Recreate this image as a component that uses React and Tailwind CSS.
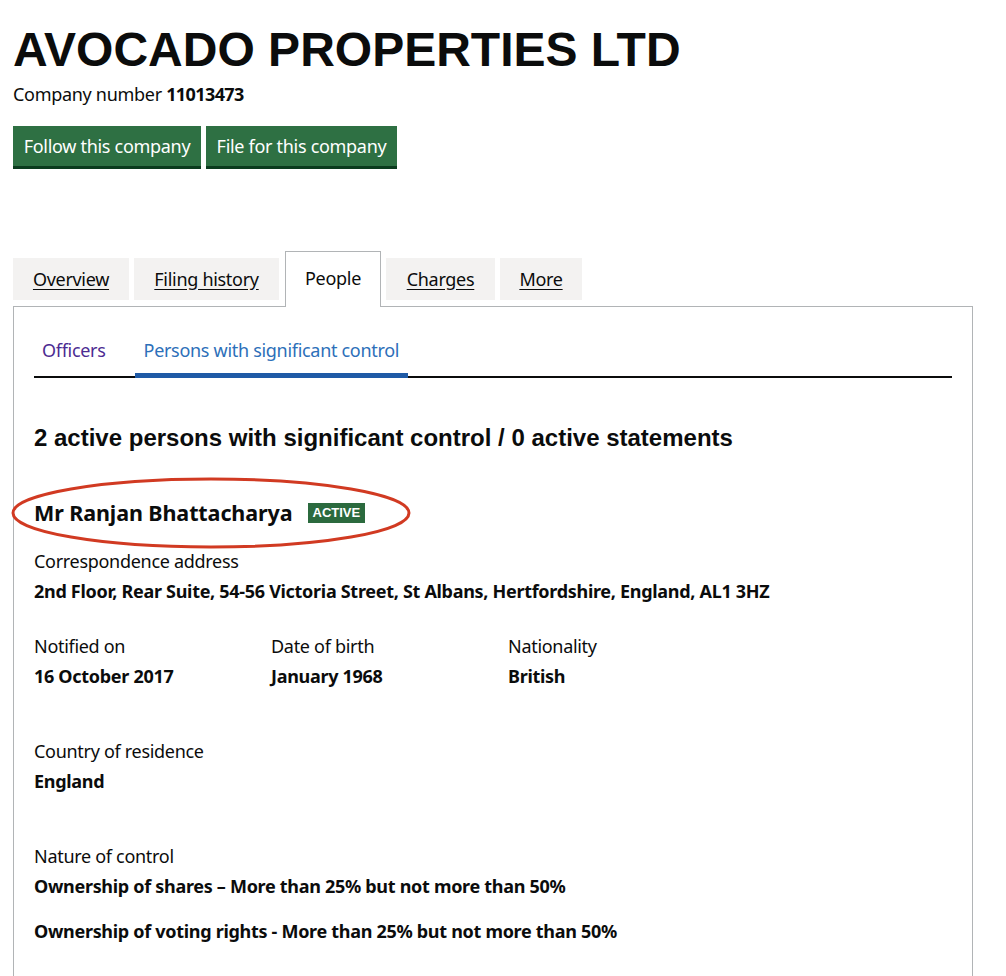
import React from 'react';

const tabs = [
  { label: 'Overview', w: 'w-[116px]' },
  { label: 'Filing history', w: 'w-[145px]' },
  { label: 'People', w: 'w-[96px] ml-[1px]', active: true },
  { label: 'Charges', w: 'w-[109px]' },
  { label: 'More', w: 'w-[82px]' },
];

function Field({ label, value }) {
  return (
    <div>
      <div className="text-[18px] leading-[30px]">{label}</div>
      <div className="text-[18px] leading-[30px] font-bold">{value}</div>
    </div>
  );
}

export default function App() {
  return (
    <div className="min-h-[976px] bg-white text-[#0b0c0c] font-['Noto_Sans',sans-serif] tracking-[-0.3px] pl-[13px] pr-[34px]">
      <h1 className="font-['Liberation_Sans',Arial,sans-serif] font-bold text-[48px] leading-[50px] pt-[25px] tracking-normal">
        AVOCADO PROPERTIES LTD
      </h1>
      <p className="text-[18px] leading-[25px] mt-[7px]">
        Company number <span className="font-bold tracking-[-0.6px]">11013473</span>
      </p>

      <div className="flex gap-[5px] mt-[19px]">
        <button className="h-[43px] w-[188px] bg-[#2e7043] text-white text-[18px] border-b-[3px] border-[#0b3b1e] pt-[1px]">
          Follow this company
        </button>
        <button className="h-[43px] w-[191px] bg-[#2e7043] text-white text-[18px] border-b-[3px] border-[#0b3b1e] pt-[1px]">
          File for this company
        </button>
      </div>

      <div className="flex items-end gap-[5px] mt-[82px]">
        {tabs.map((t) =>
          t.active ? (
            <div
              key={t.label}
              className={`${t.w} h-[56px] -mb-px bg-white border border-b-0 border-[#b1b4b6] flex items-center justify-center text-[18px] relative z-10 pb-[2px]`}
            >
              {t.label}
            </div>
          ) : (
            <div
              key={t.label}
              className={`${t.w} h-[42px] mb-[6px] bg-[#f3f2f1] flex items-center justify-center text-[18px] underline underline-offset-[3px]`}
            >
              {t.label}
            </div>
          )
        )}
      </div>

      <div className="border border-b-0 border-[#b1b4b6] w-[960px] px-[20px] pb-[40px]">
        <div className="flex border-b-2 border-[#0b0c0c] mt-[30px] text-[18px]">
          <div className="px-[8px] pb-[11px] text-[#4c2c92]">Officers</div>
          <div className="ml-[21px] px-[9px] pb-[9px] text-[#2d6fb9] border-b-[5px] border-[#1f5aa6] -mb-[2px]">
            Persons with significant control
          </div>
        </div>

        <h2 className="font-['Liberation_Sans',Arial,sans-serif] font-bold text-[24px] leading-[30px] mt-[45px] tracking-normal">
          2 active persons with significant control / 0 active statements
        </h2>

        <div className="relative mt-[45px]">
          <div className="flex items-center gap-[15px]">
            <span className="text-[21.5px] leading-[30px] font-bold tracking-[-0.1px]">Mr Ranjan Bhattacharya</span>
            <span className="h-[20px] bg-[#2b6a3e] text-white font-['Liberation_Sans',Arial,sans-serif] font-bold text-[13px] leading-[20px] px-[5px] tracking-normal">
              ACTIVE
            </span>
          </div>
          <svg
            className="absolute left-[-23px] top-[-22px] pointer-events-none"
            width="402"
            height="74"
            viewBox="0 0 402 74"
          >
            <ellipse cx="200" cy="37" rx="198" ry="34" fill="none" stroke="#d13a22" strokeWidth="3" />
          </svg>
        </div>

        <div className="mt-[18px]">
          <Field label="Correspondence address" value="2nd Floor, Rear Suite, 54-56 Victoria Street, St Albans, Hertfordshire, England, AL1 3HZ" />
        </div>

        <div className="grid grid-cols-[237px_237px_237px] mt-[25px]">
          <Field label="Notified on" value="16 October 2017" />
          <Field label="Date of birth" value="January 1968" />
          <Field label="Nationality" value="British" />
        </div>

        <div className="mt-[45px]">
          <Field label="Country of residence" value="England" />
        </div>

        <div className="mt-[45px]">
          <div className="text-[18px] leading-[30px]">Nature of control</div>
          <div className="text-[18px] leading-[30px] font-bold">Ownership of shares – More than 25% but not more than 50%</div>
          <div className="text-[18px] leading-[30px] font-bold mt-[15px]">Ownership of voting rights - More than 25% but not more than 50%</div>
        </div>
      </div>
    </div>
  );
}
